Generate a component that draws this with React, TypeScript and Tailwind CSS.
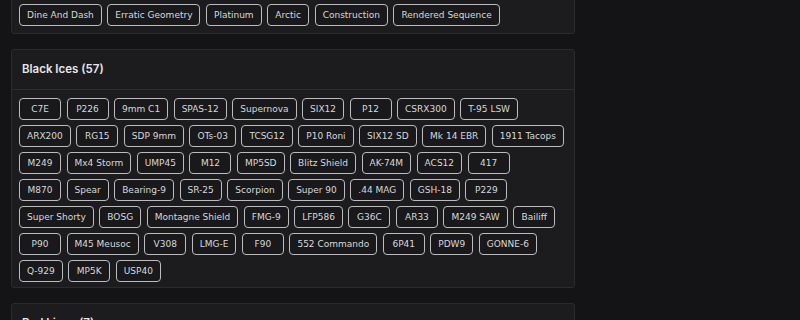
import React from "react";

const topTags = ["Dine And Dash", "Erratic Geometry", "Platinum", "Arctic", "Construction", "Rendered Sequence"];

// rows as laid out in the list
const blackIces = [
  ["C7E", "P226", "9mm C1", "SPAS-12", "Supernova", "SIX12", "P12", "CSRX300", "T-95 LSW"],
  ["ARX200", "RG15", "SDP 9mm", "OTs-03", "TCSG12", "P10 Roni", "SIX12 SD", "Mk 14 EBR", "1911 Tacops"],
  ["M249", "Mx4 Storm", "UMP45", "M12", "MP5SD", "Blitz Shield", "AK-74M", "ACS12", "417"],
  ["M870", "Spear", "Bearing-9", "SR-25", "Scorpion", "Super 90", ".44 MAG", "GSH-18", "P229"],
  ["Super Shorty", "BOSG", "Montagne Shield", "FMG-9", "LFP586", "G36C", "AR33", "M249 SAW", "Bailiff"],
  ["P90", "M45 Meusoc", "V308", "LMG-E", "F90", "552 Commando", "6P41", "PDW9", "GONNE-6"],
  ["Q-929", "MP5K", "USP40"],
];

const Tag: React.FC<{ label: string }> = ({ label }) => (
  <span
    className="h-[22px] min-w-[42px] px-[7px] flex items-center justify-center rounded-[4px] border border-[#bcbcbe] bg-[#19181b] text-[9px] leading-none text-[#d8d8da] whitespace-nowrap"
    style={{ fontFamily: "'DejaVu Sans', 'Liberation Sans', sans-serif" }}
  >
    {label}
  </span>
);

export default function App() {
  return (
    <div
      className="w-[800px] h-[320px] overflow-hidden bg-[#141316] pl-[11px] flex flex-col gap-[15px]"
      style={{ fontFamily: "Inter, 'Liberation Sans', sans-serif" }}
    >
      <div className="w-[564px] -mt-[11px] bg-[#1c1b1e] border border-[#2b2a2d] rounded-[3px] pt-[14px] pb-[7px] pl-[7px]">
        <div className="flex gap-[5.5px]">
          {topTags.map((t) => (
            <Tag key={t} label={t} />
          ))}
        </div>
      </div>

      <div className="w-[564px] bg-[#1c1b1e] border border-[#2b2a2d] rounded-[3px]">
        <div className="h-[40px] px-[10px] flex items-center border-b border-[#2e2d30]">
          <h3 className="text-[11.5px] font-semibold text-[#e8e8e8]">Black Ices (57)</h3>
        </div>
        <div className="pt-[8px] pb-[5px] pl-[7px] pr-[10px] flex flex-col gap-[5px]">
          {blackIces.map((row, i) => (
            <div key={i} className="flex gap-[5.5px]">
              {row.map((t) => (
                <Tag key={t} label={t} />
              ))}
            </div>
          ))}
        </div>
      </div>

      <div className="w-[564px] bg-[#1c1b1e] border border-[#2b2a2d] rounded-[3px]">
        <div className="h-[40px] px-[10px] flex items-center border-b border-[#2e2d30]">
          <h3 className="text-[11.5px] font-semibold text-[#e8e8e8]">Bad Lions (7)</h3>
        </div>
      </div>
    </div>
  );
}
